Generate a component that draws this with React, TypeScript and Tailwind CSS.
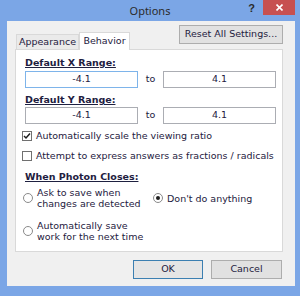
import React, { useState } from 'react';

const font = { fontFamily: '"DejaVu Sans", Tahoma, sans-serif' };

// Checkbox in the Windows 8 style
function CheckBox({ checked, label }: { checked: boolean; label: string }) {
  return (
    <div className="flex items-center h-[12px] pl-[7px] gap-[4px]">
      <span className="w-[10px] h-[10px] border border-[#707070] bg-white flex items-center justify-center">
        {checked && (
          <svg width="8" height="8" viewBox="0 0 8 8">
            <path d="M1 4 L3 6 L7 1.5" fill="none" stroke="#1e1e1e" strokeWidth="1.5" />
          </svg>
        )}
      </span>
      <span>{label}</span>
    </div>
  );
}

function Radio({ checked, lines }: { checked: boolean; lines: string[] }) {
  return (
    <div className="flex items-center gap-[4px]">
      <span className="w-[10px] h-[10px] rounded-full border border-[#8a8a8a] bg-white flex items-center justify-center shrink-0">
        {checked && <span className="w-[4px] h-[4px] rounded-full bg-[#1e1e1e]" />}
      </span>
      <div className="leading-[11px]">
        {lines.map(l => (
          <div key={l}>{l}</div>
        ))}
      </div>
    </div>
  );
}

function RangeRow({ from, to, focused }: { from: string; to: string; focused?: boolean }) {
  return (
    <div className="flex items-center">
      <div className={`w-[113px] h-[17px] border bg-white flex items-center justify-center ${focused ? 'border-[#7eb4ea]' : 'border-[#abadb3]'}`}>
        {from}
      </div>
      <span className="w-[25px] text-center">to</span>
      <div className="w-[113px] h-[17px] border border-[#abadb3] bg-white flex items-center justify-center">{to}</div>
    </div>
  );
}

export default function App() {
  const [tab] = useState('behavior');

  return (
    <div className="w-[300px] h-[296px] bg-[#7ba6e6] flex flex-col text-[#1e2040] text-[9.5px]" style={font}>
      {/* Title bar */}
      <div className="h-[21px] grid grid-cols-[1fr_auto_1fr]">
        <div />
        <div className="text-[11px] leading-[22px] text-[#2b2b2b]" style={{ fontFamily: '"Noto Sans", sans-serif' }}>
          Options
        </div>
        <div className="flex justify-end items-start pr-[5px]">
          <span className="text-[11px] font-bold leading-[16px] text-[#2a2a2a] mr-[8px]" style={{ fontFamily: '"Liberation Sans", sans-serif' }}>?</span>
          <span className="w-[32px] h-[15px] bg-[#c75050] text-white flex items-center justify-center">
            <svg width="7" height="7" viewBox="0 0 7 7">
              <path d="M0.5 0.5 L6.5 6.5 M6.5 0.5 L0.5 6.5" stroke="#fff" strokeWidth="1.6" />
            </svg>
          </span>
        </div>
      </div>

      {/* Client area */}
      <div className="flex-1 ml-[7px] mr-[5px] mb-[10px] bg-[#f0f0f0] flex flex-col pl-[8px] pr-[12px]">
        <div className="h-[28px] flex justify-between">
          <div className="flex items-end pl-[1px] relative z-10 -mb-px">
            <div className="h-[15px] w-[63px] border border-b-0 border-[#d9d9d9] bg-[#eaeaea] flex items-center justify-center mb-px">
              Appearance
            </div>
            <div className={`h-[18px] w-[51px] border border-b-0 border-[#d9d9d9] flex items-center justify-center ${tab === 'behavior' ? 'bg-white' : ''}`}>
              Behavior
            </div>
          </div>
          <button className="mt-[4px] h-[19px] w-[104px] border border-[#adadad] bg-[#e1e1e1] flex items-center justify-center">
            Reset All Settings...
          </button>
        </div>

        {/* Tab panel */}
        <div className="h-[203px] border border-[#d9d9d9] bg-white flex flex-col pl-[9px] pt-[7px]">
          <div className="h-[12px] leading-[12px] font-bold underline">Default X Range:</div>
          <div className="mt-[2px]">
            <RangeRow from="-4.1" to="4.1" focused />
          </div>
          <div className="mt-[6px] h-[12px] leading-[12px] font-bold underline">Default Y Range:</div>
          <div className="mt-[1px]">
            <RangeRow from="-4.1" to="4.1" />
          </div>
          <div className="mt-[6px] -ml-[10px]">
            <CheckBox checked label="Automatically scale the viewing ratio" />
          </div>
          <div className="mt-[8px] -ml-[10px]">
            <CheckBox checked={false} label="Attempt to express answers as fractions / radicals" />
          </div>
          <div className="mt-[9px] h-[12px] leading-[12px] font-bold underline">When Photon Closes:</div>
          <div className="mt-[4px] grid grid-cols-[130px_1fr] gap-y-[11px] -ml-[2px]">
            <Radio checked={false} lines={['Ask to save when', 'changes are detected']} />
            <Radio checked lines={["Don't do anything"]} />
            <Radio checked={false} lines={['Automatically save', 'work for the next time']} />
          </div>
        </div>

        {/* Dialog buttons */}
        <div className="flex justify-end gap-[8px] mt-[8px] pr-[1px]">
          <button className="w-[70px] h-[19px] border border-[#3c7fb1] bg-[#e5e5e5] flex items-center justify-center">OK</button>
          <button className="w-[71px] h-[19px] border border-[#adadad] bg-[#e1e1e1] flex items-center justify-center">Cancel</button>
        </div>
      </div>
    </div>
  );
}
